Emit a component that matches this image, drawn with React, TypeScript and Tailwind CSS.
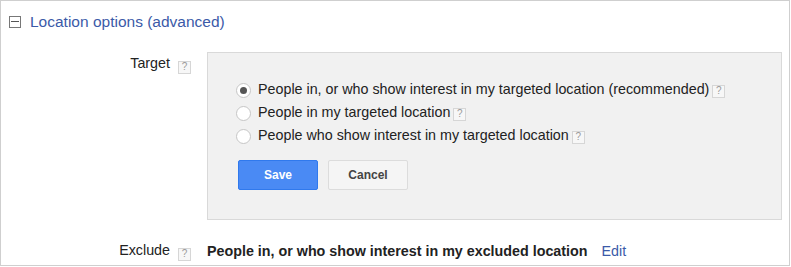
import React from "react";

function Help() {
  return (
    <span className="inline-flex h-[13px] w-[13px] items-center justify-center border border-[#d6d6d6] bg-[#f7f7f7] text-[10px] leading-none text-[#9a9a9a]">
      ?
    </span>
  );
}

function Radio({ checked }: { checked?: boolean }) {
  return (
    <span className="flex h-[15px] w-[15px] items-center justify-center rounded-full border border-[#c6c6c6] bg-white">
      {checked && <span className="h-[7px] w-[7px] rounded-full bg-[#555]" />}
    </span>
  );
}

export default function App() {
  const opts = [
    { label: "People in, or who show interest in my targeted location (recommended)", checked: true },
    { label: "People in my targeted location" },
    { label: "People who show interest in my targeted location" },
  ];
  return (
    <div
      className="h-[267px] w-[791px] bg-white"
      style={{ fontFamily: '"Liberation Sans", Arial, sans-serif' }}
    >
      <div className="h-[266px] w-[790px] border border-[#cfcfcf] text-[14.3px] text-[#222]">
        <div className="flex h-[40px] items-center pl-[8px] pt-[1px]">
          <span className="flex h-[12px] w-[12px] items-center justify-center border border-[#777]">
            <span className="h-[1px] w-[8px] bg-[#555]" />
          </span>
          <span className="ml-[9px] text-[15.5px] text-[#3b5aa8]">Location options (advanced)</span>
        </div>
        <div className="flex pt-[11px]">
          <div className="flex w-[206px] justify-end gap-[8px] pr-[16px] pt-[1px]">
            <span>Target</span>
            <span className="pt-[2px]"><Help /></span>
          </div>
          <div className="h-[168px] w-[575px] border border-[#d9d9d9] bg-[#f1f1f1] pl-[28px] pt-[29px]">
            <div className="flex flex-col gap-[7px]">
              {opts.map((o) => (
                <div key={o.label} className="flex h-[16px] items-center">
                  <Radio checked={o.checked} />
                  <span className="ml-[7px]">{o.label}</span>
                  <span className="ml-[3px]"><Help /></span>
                </div>
              ))}
            </div>
            <div className="mt-[16px] flex gap-[10px] pl-[2px]">
              <button className="h-[30px] w-[80px] rounded-[2px] border border-[#3079ed] bg-[#4a8af4] text-[12px] font-bold text-white">
                Save
              </button>
              <button className="h-[30px] w-[80px] rounded-[2px] border border-[#dcdcdc] bg-[#f5f5f5] text-[12px] font-bold text-[#444]">
                Cancel
              </button>
            </div>
          </div>
        </div>
        <div className="mt-[20px] flex items-center">
          <div className="flex w-[206px] justify-end gap-[8px] pr-[16px]">
            <span>Exclude</span>
            <span className="pt-[2px]"><Help /></span>
          </div>
          <span className="font-bold">People in, or who show interest in my excluded location</span>
          <span className="ml-[14px] text-[#3b5aa8]">Edit</span>
        </div>
      </div>
    </div>
  );
}
